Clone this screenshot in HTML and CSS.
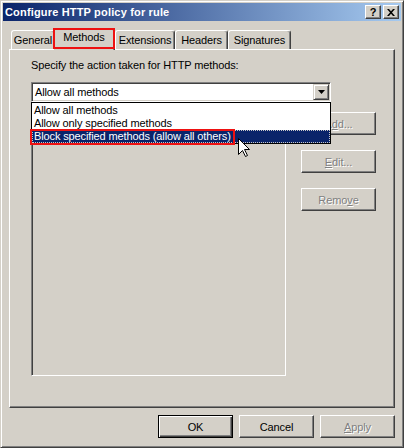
FILE: index.html
```html
<!doctype html>
<html lang="en">
  <head>
    <meta charset="UTF-8" />
    <title>Configure HTTP policy for rule</title>
    <link rel="stylesheet" href="styles.css">
  </head>
  <body>
    <div class="window">
      <div class="titlebar">
        <span class="title">Configure HTTP policy for rule</span>
        <div class="caption-buttons">
          <span class="cap-btn help">?</span>
          <span class="cap-btn close">
            <svg width="8" height="7" viewBox="0 0 8 7"><path d="M0 0h2l2 2.2L6 0h2L5 3.5 8 7H6L4 4.8 2 7H0l3-3.5z" fill="#000"/></svg>
          </span>
        </div>
      </div>

      <div class="tabs">
        <div class="tab tab-general">General</div>
        <div class="tab tab-methods selected">Methods</div>
        <div class="tab tab-extensions">Extensions</div>
        <div class="tab tab-headers">Headers</div>
        <div class="tab tab-signatures">Signatures</div>
      </div>

      <div class="panel">
        <div class="label">Specify the action taken for HTTP methods:</div>

        <div class="combo">
          <span class="combo-value">Allow all methods</span>
          <span class="combo-arrow">
            <svg width="7" height="4" viewBox="0 0 7 4"><path d="M0 0h7L3.5 4z" fill="#000"/></svg>
          </span>
          <ul class="dropdown">
            <li>Allow all methods</li>
            <li>Allow only specified methods</li>
            <li class="active"><span>Block specified methods (allow all others)</span></li>
          </ul>
        </div>

        <div class="list-row">
          <div class="listbox"></div>
          <div class="side-buttons">
            <button class="btn" disabled>A<u>d</u>d...</button>
            <button class="btn" disabled><u>E</u>dit...</button>
            <button class="btn" disabled>Remo<u>v</u>e</button>
          </div>
        </div>
      </div>

      <div class="dialog-buttons">
        <button class="btn default">OK</button>
        <button class="btn">Cancel</button>
        <button class="btn" disabled><u>A</u>pply</button>
      </div>

      <!-- annotation boxes and mouse pointer drawn over the dialog -->
      <div class="callout callout-tab"></div>
      <div class="callout callout-item"></div>
      <svg class="cursor" width="13" height="20" viewBox="0 0 13 20">
        <path d="M0.5 0.5V16.5L4.5 12.5L7.5 18.5L9.5 17.5L6.5 11.5H11.5Z" fill="#fff" stroke="#000" stroke-width="1"/>
      </svg>
    </div>
  </body>
</html>
```

FILE: styles.css
```css
body {
  margin: 0;
  background: #d4d0c8;
  font-family: "Liberation Sans", Arial, sans-serif;
  font-size: 11px;
  letter-spacing: -0.12px;
  color: #000;
}
.window {
  position: relative;
  width: 404px;
  height: 448px;
  box-sizing: border-box;
  padding: 2px;
  background: #d4d0c8;
  border: 1px solid;
  border-color: #d4d0c8 #404040 #404040 #d4d0c8;
  box-shadow: inset 1px 1px #fff, inset -1px -1px #808080;
}
.titlebar {
  height: 18px;
  display: flex;
  align-items: center;
  justify-content: space-between;
  padding: 0 2px;
  background: linear-gradient(to right, #0a246a, #a6caf0);
}
.title {
  color: #fff;
  font-weight: bold;
  letter-spacing: 0.17px;
}
.caption-buttons {
  display: flex;
  gap: 2px;
}
.cap-btn {
  width: 16px;
  height: 14px;
  box-sizing: border-box;
  display: flex;
  align-items: center;
  justify-content: center;
  background: #d4d0c8;
  border: 1px solid;
  border-color: #fff #404040 #404040 #fff;
  box-shadow: inset -1px -1px #808080;
  font-weight: bold;
  font-size: 11px;
  line-height: 12px;
}

/* tabs */
.tabs {
  display: flex;
  align-items: flex-end;
  height: 21px;
  margin: 7px 0 0 8px;
}
.tab {
  box-sizing: border-box;
  height: 19px;
  padding-top: 3px;
  line-height: 13px;
  text-align: center;
  border: 1px solid;
  border-bottom: none;
  border-color: #fff #404040 #404040 #fff;
  border-radius: 3px 3px 0 0;
  box-shadow: inset -1px 0 #808080;
}
.tab-general { width: 44px; }
.tab-extensions { width: 60px; }
.tab-headers { width: 53px; }
.tab-signatures { width: 63px; }
.tab.selected {
  position: relative;
  z-index: 1;
  width: 62px;
  height: 22px;
  margin: 0 0 -1px -2px;
  padding-top: 2px;
  background: #d4d0c8;
}

.panel {
  box-sizing: border-box;
  height: 359px;
  margin: 0 6px;
  padding: 9px 0 0 21px;
  border: 1px solid;
  border-color: #fff #404040 #404040 #fff;
  box-shadow: inset -1px -1px #808080;
}
.label {
  line-height: 13px;
}

/* combo box with its open list */
.combo {
  position: relative;
  z-index: 2;
  display: flex;
  align-items: center;
  justify-content: space-between;
  width: 300px;
  height: 20px;
  box-sizing: border-box;
  margin-top: 10px;
  padding: 1px;
  background: #fff;
  border: 1px solid;
  border-color: #808080 #fff #fff #808080;
  box-shadow: inset 1px 1px #404040, inset -1px -1px #d4d0c8;
}
.combo-value {
  padding-left: 2px;
  line-height: 13px;
}
.combo-arrow {
  display: flex;
  align-items: center;
  justify-content: center;
  width: 16px;
  height: 16px;
  box-sizing: border-box;
  background: #d4d0c8;
  border: 1px solid;
  border-color: #d4d0c8 #404040 #404040 #d4d0c8;
  box-shadow: inset 1px 1px #fff, inset -1px -1px #808080;
}
.dropdown {
  position: absolute;
  left: -1px;
  top: 19px;
  width: 300px;
  box-sizing: border-box;
  margin: 0;
  padding: 1px 0 0;
  list-style: none;
  background: #fff;
  border: 1px solid #000;
}
.dropdown li {
  height: 13px;
  line-height: 13px;
  padding-left: 2px;
}
.dropdown li.active {
  background: #0a246a;
  color: #fff;
  outline: 1px dotted #c8c8c8;
  outline-offset: -1px;
}

.list-row {
  display: flex;
  margin-top: 10px;
}
.listbox {
  width: 255px;
  height: 264px;
  box-sizing: border-box;
  border: 1px solid;
  border-color: #808080 #fff #fff #808080;
  box-shadow: inset 1px 1px #404040, inset -1px -1px #d4d0c8;
}
.side-buttons {
  display: flex;
  flex-direction: column;
  gap: 15px;
  margin-left: 15px;
}

/* push buttons */
.btn {
  width: 75px;
  height: 23px;
  box-sizing: border-box;
  padding: 0;
  font: inherit;
  letter-spacing: inherit;
  color: #000;
  background: #d4d0c8;
  border: 1px solid;
  border-color: #fff #404040 #404040 #fff;
  box-shadow: inset -1px -1px #808080;
}
.btn.default {
  border-color: #000;
  box-shadow: inset 1px 1px #fff, inset -1px -1px #404040, inset -2px -2px #808080;
}
.btn:disabled {
  color: #808080;
  text-shadow: 1px 1px #fff;
}
.dialog-buttons {
  display: flex;
  justify-content: flex-end;
  gap: 6px;
  margin: 7px 6px 0 0;
}

.callout {
  position: absolute;
  z-index: 5;
  box-sizing: border-box;
  border: 2px solid #ee1111;
}
.callout-tab {
  left: 52px;
  top: 27px;
  width: 62px;
  height: 21px;
}
.callout-item {
  left: 29px;
  top: 128px;
  width: 205px;
  height: 16px;
}
.cursor {
  position: absolute;
  z-index: 6;
  left: 237px;
  top: 137px;
}
```
